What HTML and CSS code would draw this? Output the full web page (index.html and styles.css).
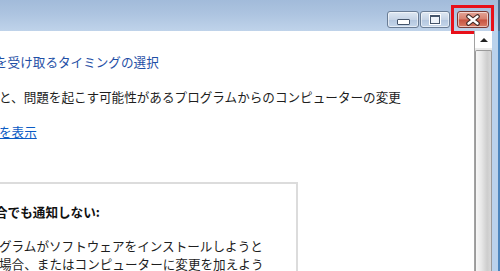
FILE: index.html
```html
<!DOCTYPE html>
<html lang="ja">
<head>
    <meta charset="UTF-8">
    <title>ユーザー アカウント制御の設定</title>
    <link rel="stylesheet" href="styles.css">
</head>
<body>
    <div class="window">
        <div class="titlebar">
            <div class="caption-buttons">
                <div class="cap-btn cap-min"><span class="min-glyph"></span></div>
                <div class="cap-btn cap-max"><span class="max-glyph"></span></div>
                <div class="highlight">
                    <div class="cap-btn cap-close">
                        <svg width="16" height="12" viewBox="0 0 16 12">
                            <path d="M3.5 2.5 L12.5 9.5 M12.5 2.5 L3.5 9.5" stroke="#3d2522" stroke-width="4.5" stroke-linecap="round"/>
                            <path d="M3.5 2.5 L12.5 9.5 M12.5 2.5 L3.5 9.5" stroke="#fff" stroke-width="2.4" stroke-linecap="round"/>
                        </svg>
                    </div>
                </div>
            </div>
        </div>
        <div class="body-row">
            <div class="content">
                <p class="heading">を受け取るタイミングの選択</p>
                <p class="desc">と、問題を起こす可能性があるプログラムからのコンピューターの変更</p>
                <p class="more"><a href="#">を表示</a></p>
                <div class="option-box">
                    <p class="option-title">合でも通知しない:</p>
                    <p class="option-text">グラムがソフトウェアをインストールしようと<br>場合、またはコンピューターに変更を加えよう</p>
                </div>
            </div>
            <div class="scrollbar">
                <div class="scroll-up"><span class="arrow"></span></div>
                <div class="scroll-thumb"></div>
            </div>
            <div class="frame-edge"></div>
        </div>
    </div>
</body>
</html>
```

FILE: styles.css
```css
html, body {
    margin: 0;
    padding: 0;
}

body {
    width: 500px;
    height: 271px;
    overflow: hidden;
    background: #fff;
    font-family: "Noto Sans CJK JP", "Noto Sans", sans-serif;
    font-size: 12.6px;
    color: #1e1e1e;
}

.window {
    display: flex;
    flex-direction: column;
    height: 271px;
}

.titlebar {
    height: 31px;
    flex: none;
    background: linear-gradient(180deg, #a2bbda 0%, #adc4e0 45%, #bfd3ea 100%);
    border-right: 2px solid #4b6a8c;
    box-sizing: border-box;
    display: flex;
    justify-content: flex-end;
}

.caption-buttons {
    display: flex;
    align-items: flex-start;
    gap: 1px;
    padding-top: 11px;
    margin-right: 4px;
}

.cap-btn {
    height: 17px;
    box-sizing: border-box;
    border: 1px solid #6a7d95;
    border-radius: 3px;
    display: flex;
    align-items: center;
    justify-content: center;
    box-shadow: inset 0 0 0 1px rgba(255, 255, 255, 0.55);
}

.cap-min {
    width: 32px;
    background: linear-gradient(180deg, #dfe8f3 0%, #c6d4e6 50%, #b3c6de 51%, #c5d6ea 100%);
}

.cap-max {
    width: 30px;
    background: linear-gradient(180deg, #dfe8f3 0%, #c6d4e6 50%, #b3c6de 51%, #c5d6ea 100%);
}

.min-glyph {
    width: 11px;
    height: 4px;
    margin-top: 5px;
    background: #fff;
    border: 1px solid #44546a;
    border-radius: 1px;
}

.max-glyph {
    width: 8px;
    height: 6px;
    border: 1px solid #44546a;
    border-top-width: 2px;
    background: #eef3f9;
    box-shadow: 0 0 0 1px #fff;
}

.highlight {
    border: 3px solid #e8101a;
    padding: 3px 2px 3px 3px;
    margin-top: -6px;
}

.cap-close {
    width: 32px;
    border-color: #7a3a34;
    background: linear-gradient(180deg, #e3a497 0%, #d6806f 48%, #c7523f 52%, #d97c66 100%);
}

.body-row {
    flex: 1;
    display: flex;
    min-height: 0;
}

.content {
    flex: 1;
    overflow: hidden;
    margin-left: -1px;
}

.content p {
    margin: 0;
    line-height: 18px;
    white-space: nowrap;
}

.heading {
    margin-top: 22px !important;
    margin-left: -4px !important;
    color: #1f4fa6;
}

.desc {
    margin-top: 17px !important;
}

.more {
    margin-top: 17px !important;
}

.more a {
    color: #0b5bc4;
    text-decoration: underline;
}

.option-box {
    width: 297px;
    margin-top: 41px;
    border: 2px solid #dcdcdc;
    border-left: none;
    padding-top: 19px;
    height: 120px;
}

.option-title {
    font-weight: bold;
    color: #111;
    margin-left: -4px !important;
}

.option-text {
    margin-top: 16px !important;
}

.scrollbar {
    width: 18px;
    flex: none;
    border-left: 1px solid #a2a2a2;
    background: #eaeaea;
    box-sizing: border-box;
    display: flex;
    flex-direction: column;
}

.scroll-up {
    height: 17px;
    background: #fff;
    display: flex;
    align-items: center;
    justify-content: center;
}

.arrow {
    width: 0;
    height: 0;
    border-left: 4px solid transparent;
    border-right: 4px solid transparent;
    border-bottom: 4px solid #222;
}

.scroll-thumb {
    flex: 1;
    margin-top: 2px;
    border: 1px solid #9a9a9a;
    border-bottom: none;
    border-radius: 2px 2px 0 0;
    background: linear-gradient(90deg, #f6f6f6 0%, #e8e8e8 35%, #cdcdcd 75%, #d8d8d8 100%);
}

.frame-edge {
    width: 8px;
    flex: none;
    background: #bad2ec;
    border-right: 2px solid #4d86bd;
    box-sizing: border-box;
}
```
